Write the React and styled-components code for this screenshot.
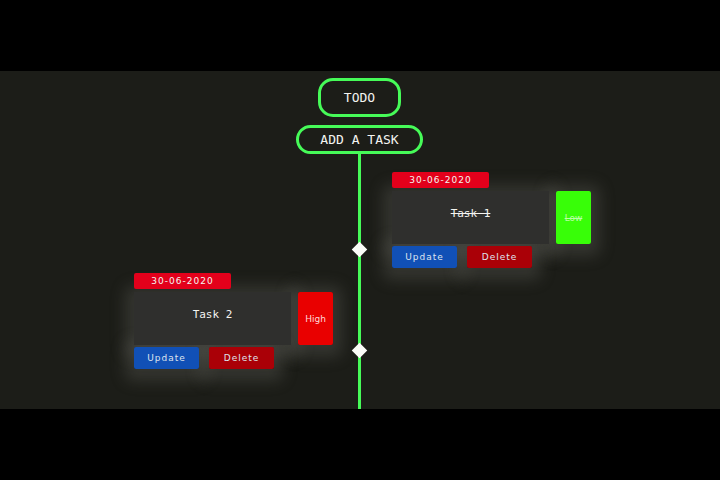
import React from "react";
import styled, { createGlobalStyle, css } from "styled-components";

const GlobalStyle = createGlobalStyle`
  * { box-sizing: border-box; }
  body {
    margin: 0;
    background: #000;
    color: #f4f4f0;
    font-family: "DejaVu Sans", sans-serif;
  }
`;

const Frame = styled.div`
  display: flex;
  flex-direction: column;
  min-height: 100vh;
  padding: 71px 0;
`;

const Screen = styled.main`
  flex: 1;
  display: flex;
  flex-direction: column;
  align-items: center;
  padding: 7px 1px 0 0;
  background: #1c1d18;
`;

const Title = styled.h1`
  margin: 0 0 8px;
  padding: 8px 23px;
  border: 3px solid #46fb58;
  border-radius: 15px;
  font: 400 13px/17px "DejaVu Sans Mono", monospace;
`;

const AddButton = styled.button`
  padding: 4px 21px;
  border: 3px solid #46fb58;
  border-radius: 15px;
  background: transparent;
  color: inherit;
  font: 400 13px/15px "DejaVu Sans Mono", monospace;
  cursor: pointer;
`;

const Timeline = styled.ol`
  flex: 1;
  align-self: stretch;
  display: flex;
  flex-direction: column;
  gap: 5px;
  margin: 0;
  padding: 18px 0 0;
  list-style: none;
  background: linear-gradient(#46fb58, #46fb58) center top / 3px 100% no-repeat;
`;

const Entry = styled.li`
  display: grid;
  grid-template-columns: 1fr 15px 1fr;
`;

const Marker = styled.span`
  grid-column: 2;
  grid-row: 1;
  place-self: end center;
  width: 11px;
  height: 11px;
  margin-bottom: 13px;
  background: #fbfcf8;
  transform: rotate(45deg);
`;

const Card = styled.article`
  grid-row: 1;
  grid-column: ${(p) => (p.$side === "right" ? 3 : 1)};
  justify-self: ${(p) => (p.$side === "right" ? "start" : "end")};
  width: 199px;
  margin: ${(p) => (p.$side === "right" ? "0 0 0 25px" : "0 19px 0 0")};
  isolation: isolate;
`;

const DateTag = styled.time`
  display: block;
  width: 97px;
  border-radius: 2px;
  background: #e3001b;
  font-size: 9px;
  line-height: 16px;
  letter-spacing: 1px;
  text-align: center;
`;

/* The halo sits behind every part of the card, so neighbouring halos add up. */
const halo = css`
  position: relative;

  &::before {
    content: "";
    position: absolute;
    inset: 0;
    z-index: -1;
    border-radius: 2px;
    box-shadow: 0 3px 15px 9px rgba(110, 110, 102, 0.3);
  }
`;

const Body = styled.div`
  display: flex;
  gap: 7px;
  padding: 3px 0 2px;
`;

const TaskText = styled.p`
  ${halo}
  flex: 1;
  height: 53px;
  margin: 0;
  padding-top: 15px;
  background: #2f2f2d;
  font: 400 11px/15px "DejaVu Sans Mono", monospace;
  text-align: center;
  text-decoration: ${(p) => (p.$done ? "line-through" : "none")};
`;

const Priority = styled.span`
  ${halo}
  display: grid;
  place-items: center;
  width: 35px;
  padding-top: 1px;
  border-radius: 2px;
  background: ${(p) => (p.$level === "Low" ? "#38fe08" : "#e90000")};
  color: ${(p) => (p.$level === "Low" ? "#b9ffa6" : "#ffd8d8")};
  font-size: 9px;
  text-decoration: ${(p) => (p.$done ? "line-through" : "none")};
`;

const Actions = styled.div`
  display: flex;
  gap: 10px;
`;

const ActionButton = styled.button`
  ${halo}
  width: 65px;
  padding: 0;
  border: 0;
  border-radius: 2px;
  background: ${(p) => (p.$danger ? "#aa0007" : "#1150b6")};
  color: #dfe4ee;
  font: 400 9px/22px "DejaVu Sans", sans-serif;
  letter-spacing: 1px;
  cursor: pointer;
`;

const tasks = [
  { name: "Task 1", date: "30-06-2020", priority: "Low", done: true },
  { name: "Task 2", date: "30-06-2020", priority: "High", done: false },
];

function TaskEntry({ task, side }) {
  return (
    <Entry>
      <Marker />
      <Card $side={side}>
        <DateTag>{task.date}</DateTag>
        <Body>
          <TaskText $done={task.done}>{task.name}</TaskText>
          <Priority $level={task.priority} $done={task.done}>{task.priority}</Priority>
        </Body>
        <Actions>
          <ActionButton type="button">Update</ActionButton>
          <ActionButton type="button" $danger>Delete</ActionButton>
        </Actions>
      </Card>
    </Entry>
  );
}

export default function App() {
  return (
    <>
      <GlobalStyle />
      <Frame>
        <Screen>
          <Title>TODO</Title>
          <AddButton type="button">ADD A TASK</AddButton>
          <Timeline>
            {tasks.map((task, i) => (
              <TaskEntry key={task.name} task={task} side={i % 2 ? "left" : "right"} />
            ))}
          </Timeline>
        </Screen>
      </Frame>
    </>
  );
}
